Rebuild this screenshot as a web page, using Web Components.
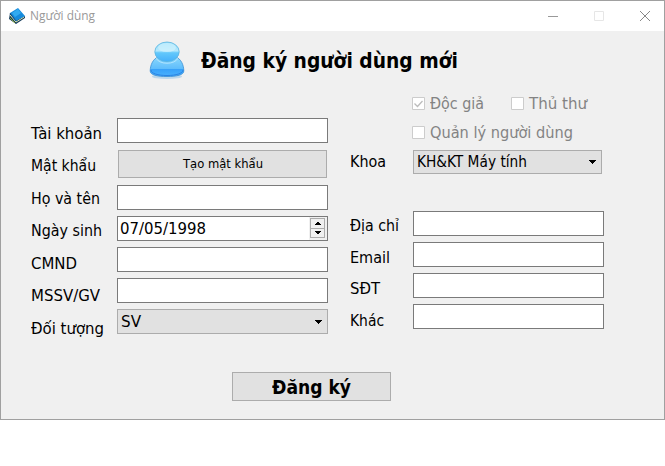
<!DOCTYPE html>
<html lang="vi">
<head>
<meta charset="utf-8">
<title>Người dùng</title>
<style>
body{margin:0;background:#fff;font-family:"DejaVu Sans Condensed","DejaVu Sans",sans-serif;font-size:16px;color:#000}
</style>
</head>
<body>
<user-window></user-window>
<script>
// Single line of text squeezed or stretched to the width given by its "w" attribute.
class FitText extends HTMLElement{
  connectedCallback(){
    const r=this.attachShadow({mode:'open'});
    r.innerHTML='<style>:host{display:block;height:20px;line-height:20px;white-space:nowrap;flex:none}span{display:inline-block;transform-origin:0 50%}</style><span><slot></slot></span>';
    const w=+this.getAttribute('w'),s=r.querySelector('span');
    this.style.width=w+'px';
    s.style.transform='scaleX('+w/s.getBoundingClientRect().width+')';
  }
}
class TextField extends HTMLElement{
  connectedCallback(){
    this.attachShadow({mode:'open'}).innerHTML='<style>:host{display:flex;box-sizing:border-box;height:25px;border:1px solid #7a7a7a;background:#fff;align-items:center;padding-left:2px}</style><slot></slot>';
  }
}
class SpinButtons extends HTMLElement{
  connectedCallback(){
    this.attachShadow({mode:'open'}).innerHTML=`<style>:host{display:block;width:18px;height:23px;margin-left:auto;background:#f0f0f0}svg{display:block}</style>
    <svg width="18" height="23" shape-rendering="crispEdges"><path d="M1.500 1.500H15.500V20.500H1.500ZM1.500 11.500H15.500" fill="#f0f0f0" stroke="#acacac"/><path d="M8 5h2v1h1v1h1v1H6V7h1V6h1zM6 14h6v1h-1v1h-1v1H8v-1H7v-1H6z" transform="translate(-.5 0)"/></svg>`;
  }
}
class SelectBox extends HTMLElement{
  connectedCallback(){
    this.attachShadow({mode:'open'}).innerHTML=`<style>:host{display:flex;box-sizing:border-box;height:25px;border:1px solid #acacac;background:#e1e1e1;align-items:center;padding:0 5px 0 3px}svg{margin-left:auto}</style>
    <slot></slot><svg width="7" height="4" shape-rendering="crispEdges"><path d="M0 0h7v1H6v1H5v1H4v1H3V3H2V2H1V1H0z"/></svg>`;
  }
}
class PushButton extends HTMLElement{
  connectedCallback(){
    this.attachShadow({mode:'open'}).innerHTML='<style>:host{display:flex;box-sizing:border-box;border:1px solid #acacac;background:#e1e1e1;align-items:center;justify-content:center}</style><slot></slot>';
  }
}
class CheckItem extends HTMLElement{
  connectedCallback(){
    this.attachShadow({mode:'open'}).innerHTML=`<style>:host{display:flex;height:20px;align-items:center;gap:5px;color:#838383}svg{flex:none}</style>
    <svg width="13" height="13"><path d="M.5.5h12v12H.5z" fill="#fff" stroke="#ccc"/>${this.hasAttribute('checked')?'<path d="M2.500 6.500l3 3 5-5.500" fill="none" stroke="#bcbcbc" stroke-width="1.300"/>':''}</svg><slot></slot>`;
  }
}
class TitleBar extends HTMLElement{
  connectedCallback(){
    this.attachShadow({mode:'open'}).innerHTML=`<style>
    :host{display:flex;height:30px;background:#fff;align-items:center;padding:0 13px 0 8px;color:#999;font:12px "Open Sans","Noto Sans",sans-serif}
    fit-text{margin-left:5px}.controls{display:flex;margin-left:auto;gap:34px}svg{display:block}</style>
    <svg width="16" height="16" viewBox="0 0 16 16"><path d="M1 5L0 11 7 16 16 10V8L7 12z" fill="#173d5c"/><path d="M1 7l6 7 8-5" fill="none" stroke="#dce5b0"/><path d="M1 10l5 5" stroke="#84a536"/><path d="M1 5L9 0 16 8 7 13z" fill="#168bdc"/><path d="M3 5L9 1l3 4-6 4z" fill="#31aaf0"/><path d="M1 5l6 8" stroke="#0a5597"/></svg>
    <fit-text w="65">Người dùng</fit-text>
    <div class="controls">
      <svg width="12" height="12"><path d="M1 6.500h10" stroke="#999"/></svg>
      <svg width="12" height="12"><path d="M1.500 1.500h9v9h-9z" fill="none" stroke="#e6e6e6"/></svg>
      <svg width="12" height="12"><path d="M1 1l10 10M11 1L1 11" stroke="#888"/></svg>
    </div>`;
  }
}
class UserAvatar extends HTMLElement{
  connectedCallback(){
    this.attachShadow({mode:'open'}).innerHTML=`<style>:host{display:block;width:36px;height:40px}svg{display:block}</style>
    <svg width="36" height="40" viewBox="0 0 36 40"><defs>
    <linearGradient id="h" x2="0" y2="1"><stop stop-color="#8fdcfb"/><stop offset=".45" stop-color="#b5e9fd"/><stop offset=".55" stop-color="#62c8fb"/><stop offset="1" stop-color="#45b0fb"/></linearGradient>
    <linearGradient id="b" x2="0" y2="1"><stop stop-color="#8ad8fc"/><stop offset=".6" stop-color="#5fbdfc"/><stop offset=".62" stop-color="#36a0fa"/><stop offset="1" stop-color="#4bb2fd"/></linearGradient></defs>
    <ellipse cx="18" cy="35.500" rx="15" ry="2.500" fill="#a7cce8" opacity=".7"/>
    <path d="M9 16C4 18 1.200 24 1.200 30c0 4 7 5.500 16.800 5.500S34.800 34 34.800 30C34.800 24 32 18 27 16z" fill="url(#b)" stroke="#398fd4" stroke-width=".8"/>
    <path d="M2 29c0 3.500 7 5.500 16 5.500S34 32.500 34 29" fill="none" stroke="#2c83e3" stroke-width="1"/>
    <ellipse cx="18" cy="10.800" rx="12.200" ry="9.800" fill="url(#h)" stroke="#5bb4df" stroke-width=".8"/>
    <ellipse cx="18" cy="6.500" rx="9" ry="4.500" fill="#d3f3fe" opacity=".65"/>
    <path d="M7 15c3 7 19 7 22 0" fill="none" stroke="#d9f3ff" stroke-width="1" opacity=".6" transform="translate(0 2)"/></svg>`;
  }
}
class UserWindow extends HTMLElement{
  connectedCallback(){
    this.attachShadow({mode:'open'}).innerHTML=`<style>
    :host{display:block;box-sizing:border-box;width:665px;height:420px;border:1px solid #a0a0a0;background:#f0f0f0}
    header{display:flex;align-items:center;height:60px;padding-left:148px;gap:16px;box-sizing:border-box;font-weight:bold;font-size:22px}
    main{display:grid;grid-template-columns:86px 211px 22px 63px 191px;height:250px;padding-left:30px}
    .labels,.fields,.right{display:flex;flex-direction:column;align-items:flex-start}
    .labels{padding-top:32.500px}.labels>*{margin-bottom:12px}.labels>.more{margin-bottom:13px}
    .fields{align-items:stretch;gap:6px;padding-top:27px}
    .fields push-button{height:28px;margin:1px 1px;font-size:13px}
    .right{align-items:stretch;padding-top:2.500px}
    .checks{display:flex;gap:27px;margin:0 0 9px -1px}
    .right>check-item{margin:0 -10px 0 -1px}
    .right select-box{width:189px;height:24px;margin:7.500px 0 37px}
    .right text-field{margin-bottom:6px}
    .rlabels{padding-top:60.500px}.rlabels>*{margin-bottom:12px}.rlabels>.first{margin-bottom:44px}.rlabels>.short{margin-bottom:11px}
    footer{display:flex;padding:31px 0 0 231px}
    footer push-button{width:159px;height:29px;font-size:19px;font-weight:bold}
    </style>
    <title-bar></title-bar>
    <header><user-avatar></user-avatar><fit-text w="257">Đăng ký người dùng mới</fit-text></header>
    <main>
      <div class="labels"><fit-text w="71">Tài khoản</fit-text><fit-text class="more" w="65">Mật khẩu</fit-text><fit-text w="69">Họ và tên</fit-text><fit-text class="more" w="71">Ngày sinh</fit-text><fit-text w="46">CMND</fit-text><fit-text class="more" w="69">MSSV/GV</fit-text><fit-text w="73">Đối tượng</fit-text></div>
      <div class="fields"><text-field></text-field><push-button><fit-text w="80">Tạo mật khẩu</fit-text></push-button><text-field></text-field><text-field><fit-text w="86">07/05/1998</fit-text><spin-buttons></spin-buttons></text-field><text-field></text-field><text-field></text-field><select-box><fit-text w="20">SV</fit-text></select-box></div>
      <div></div>
      <div class="labels rlabels"><fit-text class="first" w="36">Khoa</fit-text><fit-text w="49">Địa chỉ</fit-text><fit-text class="short" w="40">Email</fit-text><fit-text w="30">SĐT</fit-text><fit-text w="34">Khác</fit-text></div>
      <div class="right">
        <div class="checks"><check-item checked><fit-text w="54">Độc giả</fit-text></check-item><check-item><fit-text w="58">Thủ thư</fit-text></check-item></div>
        <check-item><fit-text w="143">Quản lý người dùng</fit-text></check-item>
        <select-box><fit-text w="110">KH&amp;KT Máy tính</fit-text></select-box>
        <text-field></text-field><text-field></text-field><text-field></text-field><text-field></text-field>
      </div>
    </main>
    <footer><push-button><fit-text w="79">Đăng ký</fit-text></push-button></footer>`;
  }
}
customElements.define('fit-text',FitText);
customElements.define('text-field',TextField);
customElements.define('spin-buttons',SpinButtons);
customElements.define('select-box',SelectBox);
customElements.define('push-button',PushButton);
customElements.define('check-item',CheckItem);
customElements.define('title-bar',TitleBar);
customElements.define('user-avatar',UserAvatar);
customElements.define('user-window',UserWindow);
</script>
</body>
</html>
